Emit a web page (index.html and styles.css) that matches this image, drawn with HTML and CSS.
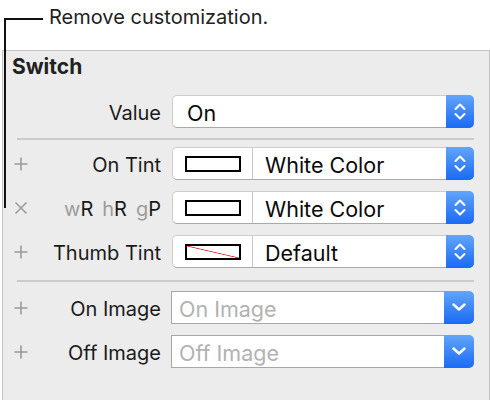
FILE: index.html
```html
<!DOCTYPE html>
<html>
<head>
<meta charset="utf-8">
<link rel="stylesheet" href="styles.css">
</head>
<body>
<div class="callout">Remove customization.</div>
<div class="leader"></div>
<section class="panel">
  <h2 class="title">Switch</h2>

  <div class="group g1">
    <div class="row">
      <span class="icon"></span>
      <span class="label">Value</span>
      <div class="popup">
        <span class="ptext">On</span>
        <span class="stepper"><svg width="28" height="33" viewBox="0 0 28 33"><polyline points="9.5,14 14,9.5 18.5,14" /><polyline points="9.5,19 14,23.5 18.5,19" /></svg></span>
      </div>
    </div>
  </div>

  <div class="sep s1"></div>

  <div class="group g2">
    <div class="row">
      <span class="icon"><svg width="16" height="16" viewBox="0 0 16 16"><path d="M8 1.5v13M1.5 8h13" /></svg></span>
      <span class="label">On Tint</span>
      <div class="popup">
        <span class="well"><span class="swatch"></span></span>
        <span class="ptext">White Color</span>
        <span class="stepper"><svg width="28" height="33" viewBox="0 0 28 33"><polyline points="9.5,14 14,9.5 18.5,14" /><polyline points="9.5,19 14,23.5 18.5,19" /></svg></span>
      </div>
    </div>
    <div class="row">
      <span class="icon"><svg width="16" height="16" viewBox="0 0 16 16"><path d="M2.5 2.5l11 11M13.5 2.5l-11 11" /></svg></span>
      <span class="label trait"><span class="k">w</span>R<span class="gap"></span><span class="k">h</span>R<span class="gap"></span><span class="k">g</span>P</span>
      <div class="popup">
        <span class="well"><span class="swatch"></span></span>
        <span class="ptext">White Color</span>
        <span class="stepper"><svg width="28" height="33" viewBox="0 0 28 33"><polyline points="9.5,14 14,9.5 18.5,14" /><polyline points="9.5,19 14,23.5 18.5,19" /></svg></span>
      </div>
    </div>
    <div class="row">
      <span class="icon"><svg width="16" height="16" viewBox="0 0 16 16"><path d="M8 1.5v13M1.5 8h13" /></svg></span>
      <span class="label">Thumb Tint</span>
      <div class="popup">
        <span class="well"><span class="swatch none"></span></span>
        <span class="ptext">Default</span>
        <span class="stepper"><svg width="28" height="33" viewBox="0 0 28 33"><polyline points="9.5,14 14,9.5 18.5,14" /><polyline points="9.5,19 14,23.5 18.5,19" /></svg></span>
      </div>
    </div>
  </div>

  <div class="sep s2"></div>

  <div class="group g3">
    <div class="row">
      <span class="icon"><svg width="16" height="16" viewBox="0 0 16 16"><path d="M8 1.5v13M1.5 8h13" /></svg></span>
      <span class="label">On Image</span>
      <div class="combo">
        <span class="field">On Image</span>
        <span class="drop"><svg width="30" height="33" viewBox="0 0 30 33"><polyline points="9.5,13.5 15,18.5 20.5,13.5" /></svg></span>
      </div>
    </div>
    <div class="row">
      <span class="icon"><svg width="16" height="16" viewBox="0 0 16 16"><path d="M8 1.5v13M1.5 8h13" /></svg></span>
      <span class="label">Off Image</span>
      <div class="combo">
        <span class="field">Off Image</span>
        <span class="drop"><svg width="30" height="33" viewBox="0 0 30 33"><polyline points="9.5,13.5 15,18.5 20.5,13.5" /></svg></span>
      </div>
    </div>
  </div>
</section>
</body>
</html>
```

FILE: styles.css
```css
html, body {
  margin: 0;
  padding: 0;
}
body {
  width: 490px;
  height: 400px;
  overflow: hidden;
  background: #ffffff;
  font-family: "Inter", "Open Sans", sans-serif;
  color: #1a1a1a;
  position: relative;
}
.callout {
  height: 50px;
  box-sizing: border-box;
  padding: 4px 0 0 49px;
  font-size: 20px;
  line-height: 27px;
  color: #222;
}
.leader {
  position: absolute;
  left: 4px;
  top: 18px;
  width: 39px;
  height: 190px;
  box-sizing: border-box;
  border-left: 2px solid #111;
  border-top: 2px solid #111;
  z-index: 2;
}
.panel {
  margin-left: 2px;
  width: 486px;
  height: 349px;
  border: 1px solid #c3c3c3;
  border-bottom: none;
  background: #ececec;
}
.title {
  margin: 0;
  padding: 2px 0 0 9px;
  font-size: 21px;
  font-weight: 700;
  line-height: 27px;
  color: #222;
}
.group {
  display: flex;
  flex-direction: column;
  gap: 11px;
  padding: 0 15px 0 8px;
}
.g1 { margin-top: 15px; }
.g2 { margin-top: 7px; }
.g3 { margin-top: 9px; }
.sep {
  height: 2px;
  margin: 0 15px 0 14px;
  background: #cbcbcb;
}
.s1 { margin-top: 10px; }
.s2 { margin-top: 12px; }
.row {
  display: grid;
  grid-template-columns: 20px 1fr 302px;
  align-items: center;
  height: 33px;
}
.icon {
  display: flex;
  justify-content: center;
  align-items: center;
}
.icon svg path {
  stroke: #9b9b9b;
  stroke-width: 1.6;
  fill: none;
}
.label {
  text-align: right;
  padding: 3px 11px 0 0;
  font-size: 20px;
  line-height: 27px;
  white-space: nowrap;
  color: #1a1a1a;
}
.trait .k { color: #9c9c9c; }
.trait .gap { display: inline-block; width: 9px; }
.popup {
  display: flex;
  align-items: stretch;
  height: 33px;
  box-sizing: border-box;
  background: #fff;
  border: 1px solid #cdcdcd;
  border-bottom-color: #a9a9a9;
  border-radius: 5px;
}
.ptext {
  flex: 1;
  display: flex;
  align-items: center;
  padding: 3px 0 0 14px;
  font-size: 21.5px;
  color: #0a0a0a;
}
.well {
  width: 79px;
  display: flex;
  align-items: center;
  justify-content: center;
  border-right: 1px solid #c8c8c8;
}
.well + .ptext { padding-left: 12px; }
.swatch {
  width: 56px;
  height: 16px;
  box-sizing: border-box;
  border: 2px solid #000;
  background: #fff;
}
.swatch.none {
  background: linear-gradient(to top right, transparent calc(50% - 0.8px), #e8262a 50%, transparent calc(50% + 0.8px));
}
.stepper {
  width: 28px;
  margin: -1px -1px -1px 0;
  border-radius: 0 5px 5px 0;
  background: linear-gradient(to bottom, #62a5fa, #1a6af5);
  display: flex;
}
.stepper svg polyline,
.drop svg polyline {
  fill: none;
  stroke: #fff;
  stroke-width: 2;
  stroke-linecap: round;
  stroke-linejoin: round;
}
.combo {
  display: flex;
  height: 33px;
  margin-left: -1px;
}
.field {
  flex: 1;
  display: flex;
  align-items: center;
  box-sizing: border-box;
  padding: 3px 0 0 7px;
  background: #fff;
  border: 1px solid #a8a8a8;
  border-right: none;
  font-size: 21.5px;
  color: #b2b2b2;
}
.drop {
  width: 30px;
  border-radius: 0 5px 5px 0;
  background: linear-gradient(to bottom, #62a5fa, #1a6af5);
  display: flex;
}
.drop svg polyline { stroke-width: 2.5; }
```
